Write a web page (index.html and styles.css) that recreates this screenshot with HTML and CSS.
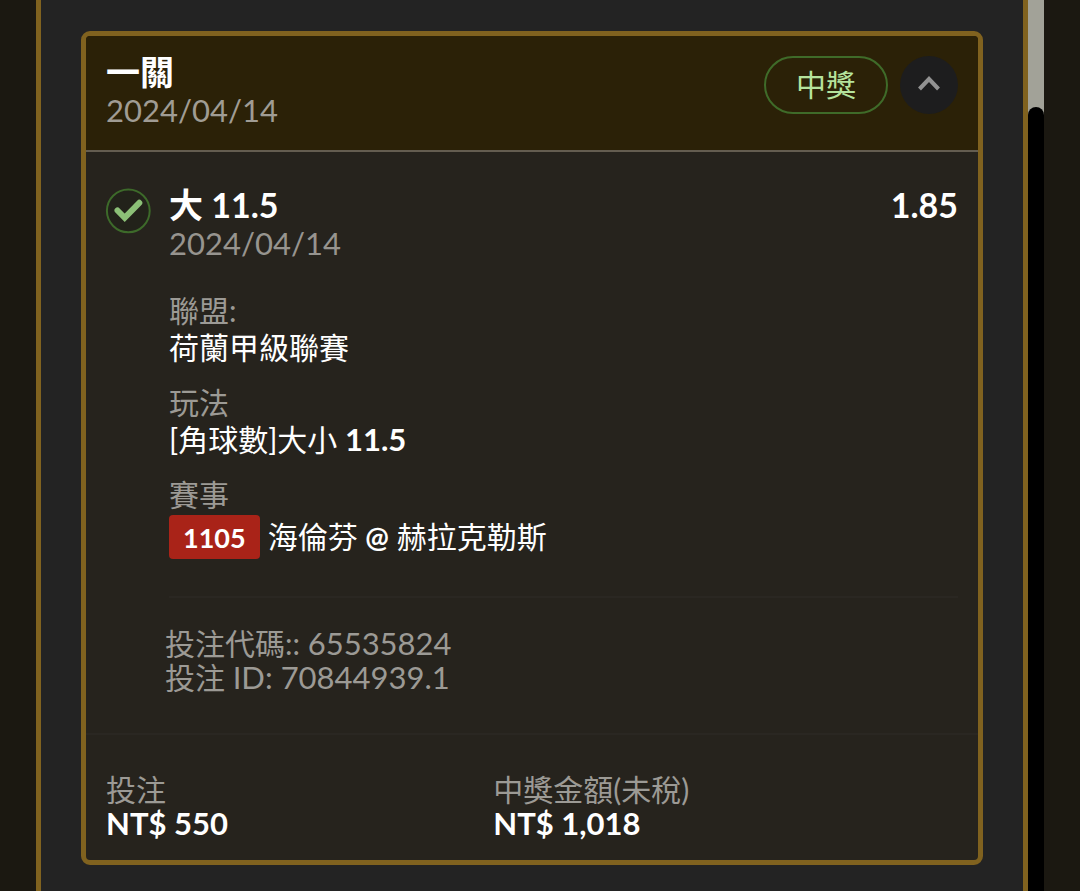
FILE: index.html
```html
<!DOCTYPE html>
<html lang="zh-Hant">
<head>
    <meta charset="UTF-8">
    <meta name="viewport" content="width=device-width, initial-scale=1.0">
    <title>投注紀錄</title>
    <link rel="stylesheet" href="styles.css">
</head>
<body>
    <div class="page">
        <main class="panel">
            <article class="bet-card">
                <header class="bet-header">
                    <div>
                        <h1 class="title">一關</h1>
                        <p class="date">2024/04/14</p>
                    </div>
                    <div class="header-actions">
                        <span class="status">中獎</span>
                        <button class="toggle" type="button" aria-label="收合">
                            <svg width="22" height="18" viewBox="0 0 22 18"><path d="M1.5 13 L11 3 L20.5 13" fill="none" stroke="#929292" stroke-width="4"/></svg>
                        </button>
                    </div>
                </header>

                <section class="selection">
                    <svg class="check" width="44" height="46" viewBox="0 0 44 46">
                        <circle cx="22.3" cy="22.8" r="21.4" fill="#22221a" stroke="#3d6a2a" stroke-width="2"/>
                        <path d="M11.5 22.5 L18.7 29.8 L33.3 14.8" fill="none" stroke="#8cc077" stroke-width="6" stroke-linecap="round"/>
                    </svg>
                    <div class="selection-body">
                        <div class="selection-top">
                            <h2 class="title">大 11.5</h2>
                            <span class="odds">1.85</span>
                        </div>
                        <p class="date">2024/04/14</p>
                        <dl class="details">
                            <div>
                                <dt>聯盟:</dt>
                                <dd>荷蘭甲級聯賽</dd>
                            </div>
                            <div>
                                <dt>玩法</dt>
                                <dd>[角球數]大小 <strong>11.5</strong></dd>
                            </div>
                            <div>
                                <dt>賽事</dt>
                                <dd class="match"><span class="match-code">1105</span><span>海倫芬 <span class="at">@</span> 赫拉克勒斯</span></dd>
                            </div>
                        </dl>
                        <div class="codes">
                            <p>投注代碼:: <span class="num">65535824</span></p>
                            <p>投注 <span class="num">ID: 70844939.1</span></p>
                        </div>
                    </div>
                </section>

                <footer class="totals">
                    <div>
                        <p class="label">投注</p>
                        <p class="amount">NT$ 550</p>
                    </div>
                    <div>
                        <p class="label">中獎金額(未稅)</p>
                        <p class="amount">NT$ 1,018</p>
                    </div>
                </footer>
            </article>
        </main>
        <div class="scroll-track">
            <div class="scroll-thumb"></div>
        </div>
    </div>
</body>
</html>
```
FILE: styles.css
```css
* { box-sizing: border-box; }
body { margin: 0; font-family: Lato, 'Noto Sans CJK TC', sans-serif; font-size: 30px; line-height: 37px; background-color: #1b1811; color: #fff; }
h1, h2, p, dl, dd { margin: 0; }

.page { display: flex; min-height: 100vh; padding: 0 36px; }
.panel { flex: 1; padding: 31px 40px 27px; background-color: #232323; border: solid #80621f; border-width: 0 5px; }
.scroll-track { display: flex; width: 16px; padding-top: 107px; background-color: #a2a298; }
.scroll-thumb { flex: 1; background-color: #000; border-radius: 8px 8px 0 0; }

.bet-card { background-color: #26231d; border: 5px solid #80621f; border-radius: 9px; }
.bet-header { display: flex; justify-content: space-between; align-items: flex-start; padding: 17px 20px 21px; background-color: #2b2107; border-bottom: 2px solid #645d50; border-radius: 4px 4px 0 0; }
.title { font-size: 34px; font-weight: 700; line-height: 38px; }
.date { font-size: 31px; line-height: 38px; color: #a09c94; }
.header-actions { display: flex; gap: 12px; padding-top: 3px; }
.status { height: 58px; padding: 0 30px; line-height: 52px; color: #b5e39c; border: 2px solid #3f6b29; border-radius: 29px; }
.toggle { display: flex; align-items: center; justify-content: center; width: 58px; height: 58px; padding: 0; border: 0; border-radius: 50%; background-color: #1d1d1e; }

.selection { display: flex; gap: 19px; padding: 34px 20px 39px; }
.check { flex: none; margin-top: 2px; overflow: visible; }
.selection-body { flex: 1; }
.selection-top { display: flex; justify-content: space-between; }
.odds { font-size: 34px; font-weight: 700; line-height: 38px; }
.selection .date { color: #97948f; }

.details { display: grid; gap: 18px; padding: 30px 0 37px; border-bottom: 2px solid #2a2722; }
dt, .label, .codes { color: #9c9a95; }
.details strong { font-size: 31px; }
.match { display: flex; align-items: center; gap: 8px; margin-top: 2px; }
.match-code { height: 44px; padding: 0 14px; font-size: 27px; font-weight: 700; line-height: 46px; background-color: #a92318; border-radius: 4px; }
.at { font-size: 28px; font-weight: 700; }
.codes { margin: 28px 0 0 -4px; line-height: 34px; }
.num { font-size: 31px; }

.totals { display: grid; grid-template-columns: 5fr 6fr; padding: 37px 20px 20px; line-height: 34px; border-top: 2px solid #2a2722; }
.amount { font-size: 31px; font-weight: 700; }
```
